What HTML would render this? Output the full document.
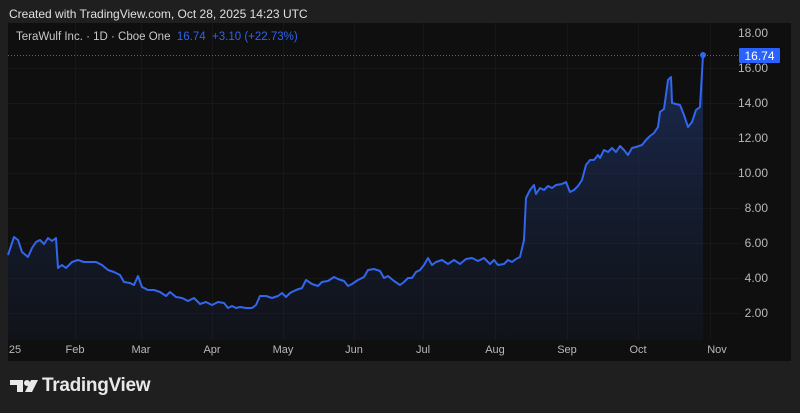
<!DOCTYPE html>
<html><head><style>
body{margin:0;width:800px;height:413px;background:#1f1f1f;font-family:"Liberation Sans",sans-serif;position:relative;overflow:hidden}
.t{position:absolute;white-space:nowrap}
</style></head><body>
<div class="t" style="left:9px;top:7px;font-size:12px;color:#e0e0e0">Created with TradingView.com, Oct 28, 2025 14:23 UTC</div>
<svg style="position:absolute;left:0;top:0" width="800" height="413">
<defs><linearGradient id="g" x1="0" y1="0" x2="0" y2="1"><stop offset="0" stop-color="#2a4ea8" stop-opacity="0.45"/><stop offset="1" stop-color="#1a2a55" stop-opacity="0.15"/></linearGradient></defs>
<rect x="8" y="23" width="783" height="338" fill="#0f0f0f"/>
<g stroke="#171717" stroke-width="1">
<line x1="8" y1="68.5" x2="740" y2="68.5"/><line x1="8" y1="103.5" x2="740" y2="103.5"/><line x1="8" y1="138.5" x2="740" y2="138.5"/><line x1="8" y1="173.5" x2="740" y2="173.5"/><line x1="8" y1="208.5" x2="740" y2="208.5"/><line x1="8" y1="243.5" x2="740" y2="243.5"/><line x1="8" y1="278.5" x2="740" y2="278.5"/><line x1="8" y1="313.5" x2="740" y2="313.5"/>
<line x1="75.5" y1="23" x2="75.5" y2="340"/><line x1="141.5" y1="23" x2="141.5" y2="340"/><line x1="212.5" y1="23" x2="212.5" y2="340"/><line x1="283.5" y1="23" x2="283.5" y2="340"/><line x1="354.5" y1="23" x2="354.5" y2="340"/><line x1="423.5" y1="23" x2="423.5" y2="340"/><line x1="495.5" y1="23" x2="495.5" y2="340"/><line x1="567.5" y1="23" x2="567.5" y2="340"/><line x1="638.5" y1="23" x2="638.5" y2="340"/><line x1="710.5" y1="23" x2="710.5" y2="340"/>
</g>
<line x1="8" y1="55.5" x2="740" y2="55.5" stroke="#2962ff" stroke-dasharray="1 2" stroke-width="1"/>
<polygon fill="url(#g)" points="8,340 8,255 14,237 18,240 22,252 28,257 32,248 36,242 40,240 44,244 48,238 52,241 56,238 58,268 62,265 66,268 72,262 78,260 84,262 90,262 96,262 102,265 108,270 114,272 120,275 124,282 130,283 134,285 138,276 142,287 148,290 154,290 160,292 166,296 170,292 176,297 182,298 188,301 194,298 200,304 206,302 212,305 218,302 224,303 228,308 232,306 236,308 240,307 246,308 252,308 256,305 260,296 266,296 272,298 278,296 282,293 286,297 290,293 296,290 302,288 306,280 312,284 318,286 322,282 328,281 334,277 338,279 344,281 348,286 352,284 358,280 364,277 368,270 374,269 380,271 384,278 388,276 394,281 400,285 404,282 408,278 412,278 416,272 420,270 424,265 428,258 432,265 436,262 442,260 448,264 454,260 460,264 466,259 472,258 478,261 484,258 490,264 494,260 498,265 504,264 508,260 512,262 516,259 520,257 524,240 526,198 530,190 534,185 536,194 540,188 544,190 548,186 552,188 556,185 562,184 566,182 570,192 574,190 578,186 582,180 586,165 590,160 594,160 598,155 600,158 604,150 608,152 612,148 616,152 620,146 624,150 628,155 632,148 636,147 642,145 646,140 650,136 654,133 658,127 660,112 664,109 668,80 671,77 672,103 676,104 680,105 684,115 688,127 692,122 696,110 700,107 703,55 703,340"/>
<polyline fill="none" stroke="#3366ee" stroke-width="2" stroke-linejoin="round" points="8,255 14,237 18,240 22,252 28,257 32,248 36,242 40,240 44,244 48,238 52,241 56,238 58,268 62,265 66,268 72,262 78,260 84,262 90,262 96,262 102,265 108,270 114,272 120,275 124,282 130,283 134,285 138,276 142,287 148,290 154,290 160,292 166,296 170,292 176,297 182,298 188,301 194,298 200,304 206,302 212,305 218,302 224,303 228,308 232,306 236,308 240,307 246,308 252,308 256,305 260,296 266,296 272,298 278,296 282,293 286,297 290,293 296,290 302,288 306,280 312,284 318,286 322,282 328,281 334,277 338,279 344,281 348,286 352,284 358,280 364,277 368,270 374,269 380,271 384,278 388,276 394,281 400,285 404,282 408,278 412,278 416,272 420,270 424,265 428,258 432,265 436,262 442,260 448,264 454,260 460,264 466,259 472,258 478,261 484,258 490,264 494,260 498,265 504,264 508,260 512,262 516,259 520,257 524,240 526,198 530,190 534,185 536,194 540,188 544,190 548,186 552,188 556,185 562,184 566,182 570,192 574,190 578,186 582,180 586,165 590,160 594,160 598,155 600,158 604,150 608,152 612,148 616,152 620,146 624,150 628,155 632,148 636,147 642,145 646,140 650,136 654,133 658,127 660,112 664,109 668,80 671,77 672,103 676,104 680,105 684,115 688,127 692,122 696,110 700,107 703,55"/>
<circle cx="703" cy="55" r="3" fill="#3366ee"/>
<rect x="739" y="48" width="41" height="15" rx="1" fill="#2962ff"/>
<text x="759.5" y="60" font-size="12" fill="#fff" text-anchor="middle" font-family="Liberation Sans">16.74</text>
<g font-size="12" fill="#b8b8b8" font-family="Liberation Sans" text-anchor="end">
<text x="768" y="37">18.00</text><text x="768" y="72">16.00</text><text x="768" y="107">14.00</text><text x="768" y="142">12.00</text><text x="768" y="177">10.00</text><text x="768" y="212">8.00</text><text x="768" y="247">6.00</text><text x="768" y="282">4.00</text><text x="768" y="317">2.00</text>
</g>
<g font-size="11" fill="#b8b8b8" font-family="Liberation Sans" text-anchor="middle">
<text x="15" y="353">25</text><text x="75" y="353">Feb</text><text x="141" y="353">Mar</text><text x="212" y="353">Apr</text><text x="283" y="353">May</text><text x="354" y="353">Jun</text><text x="423" y="353">Jul</text><text x="495" y="353">Aug</text><text x="567" y="353">Sep</text><text x="638" y="353">Oct</text><text x="717" y="353">Nov</text>
</g>
<g fill="#e8e8e8">
<path d="M10 380h13v12h-6v-7h-7z"/><circle cx="27" cy="383" r="3"/><path d="M31 380h7l-6 12h-7z"/>
</g>
</svg>
<div class="t" style="left:16px;top:31px;font-size:11.5px;color:#c8c8c8">TeraWulf Inc. · 1D · Cboe One&nbsp; <span style="color:#2f63ee">16.74&nbsp; +3.10 (+22.73%)</span></div>
<div class="t" style="left:42px;top:375px;font-size:19px;font-weight:bold;color:#e8e8e8;letter-spacing:-0.3px">TradingView</div>
</body></html>
